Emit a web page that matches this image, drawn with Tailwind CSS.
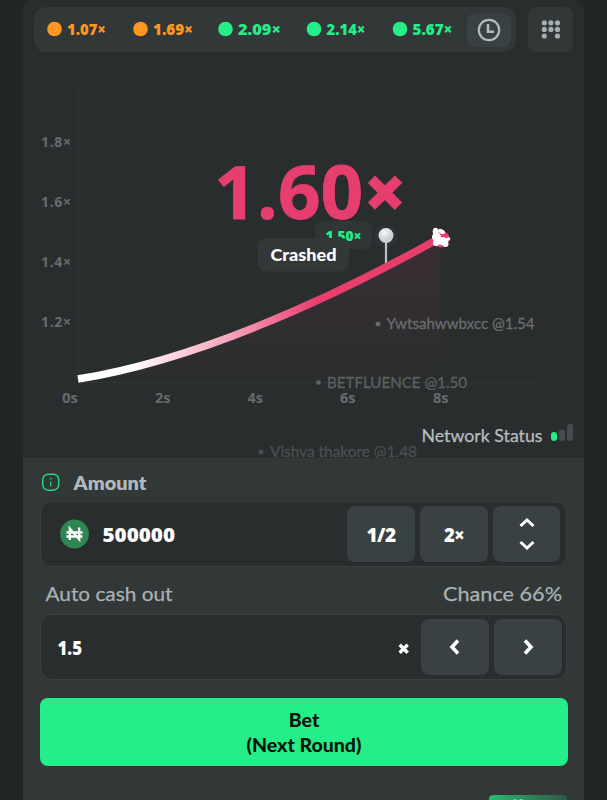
<!DOCTYPE html>
<html lang="en">
<head>
<meta charset="utf-8">
<meta name="viewport" content="width=device-width, initial-scale=1">
<title>Crash</title>
<script src="https://cdn.jsdelivr.net/npm/@tailwindcss/browser@4"></script>
</head>
<body class="h-[800px] overflow-hidden bg-[#232626] px-[23px] font-['Lato','Noto_Sans',sans-serif] font-bold">
<main class="flex h-[800px] w-[561px] flex-col overflow-hidden rounded-t-xl bg-[#323738]">
  <section class="relative flex h-[458px] shrink-0 flex-col bg-[#2a2d2e]">
    <header class="flex gap-3 pt-[7px] pl-[11px]">
      <div class="flex h-[45px] w-[482px] items-center rounded-xl bg-[#323738]">
        <svg class="h-[45px] w-[430px]" viewBox="34 7 430 45" font-family="'Open Sans', 'Noto Sans', sans-serif" font-weight="800" font-size="16.500">
          <g fill="#ff9820">
            <circle cx="54.500" cy="29" r="7.300"/><text x="67" y="35" textLength="39" lengthAdjust="spacingAndGlyphs">1.07×</text>
            <circle cx="140.500" cy="29" r="7.300"/><text x="153" y="35" textLength="40" lengthAdjust="spacingAndGlyphs">1.69×</text>
          </g>
          <g fill="#25ee89">
            <circle cx="225.500" cy="29" r="7.300"/><text x="238" y="35" textLength="43" lengthAdjust="spacingAndGlyphs">2.09×</text>
            <circle cx="314" cy="29" r="7.300"/><text x="326.500" y="35" textLength="39" lengthAdjust="spacingAndGlyphs">2.14×</text>
            <circle cx="400" cy="29" r="7.300"/><text x="412.500" y="35" textLength="40" lengthAdjust="spacingAndGlyphs">5.67×</text>
          </g>
        </svg>
        <button class="ml-[3px] grid h-[34px] w-[44px] place-items-center rounded-lg bg-[#3a4142]">
          <svg class="size-6" viewBox="0 0 24 24" fill="none" stroke="#b0b9bc" stroke-width="2.200"><circle cx="12" cy="12" r="10.200"/><path d="M11 6v7.800h6" stroke-width="2.600"/></svg>
        </button>
      </div>
      <button class="grid size-[45px] place-items-center rounded-lg bg-[#323738]">
        <svg class="h-5 w-5" viewBox="0 0 20 20" fill="#a5aeb1"><circle cx="3.300" cy="2.800" r="2.600"/><circle cx="9.900" cy="2.800" r="2.600"/><circle cx="16.500" cy="2.800" r="2.600"/><circle cx="3.300" cy="9.400" r="2.600"/><circle cx="9.900" cy="9.400" r="2.600"/><circle cx="16.500" cy="9.400" r="2.600"/><circle cx="3.300" cy="16" r="2.600"/><circle cx="16.500" cy="16" r="2.600"/></svg>
      </button>
    </header>
    <svg class="h-[406px] w-[561px]" viewBox="23 52 561 406" font-family="Lato, 'Noto Sans', sans-serif">
      <defs>
        <linearGradient id="curve" gradientUnits="userSpaceOnUse" x1="78" y1="0" x2="440" y2="0"><stop offset=".14" stop-color="#fff"/><stop offset=".43" stop-color="#f6a0b7"/><stop offset=".66" stop-color="#ea3e70"/><stop offset="1" stop-color="#e63e6e"/></linearGradient>
        <linearGradient id="area" x1="0" y1="0" x2="0" y2="1"><stop stop-color="#e63e6e" stop-opacity=".09"/><stop offset="1" stop-color="#e63e6e" stop-opacity="0"/></linearGradient>
        <radialGradient id="ball" cx=".4" cy=".3"><stop stop-color="#f4f8fa"/><stop offset="1" stop-color="#c8d1d5"/></radialGradient>
      </defs>
      <path d="M78.500 85V382.500H541M78 141.500h5M78 202h5M78 262h5M78 322h5" stroke="#2f3435" fill="none"/>
      <path d="M78 379C190 361 320 305 440 238V382H78Z" fill="url(#area)"/>
      <g fill="#666b6d" font-size="14" font-weight="700" font-family="'Open Sans', 'Noto Sans', sans-serif">
        <text x="41" y="147" textLength="30">1.8×</text><text x="41" y="207" textLength="30">1.6×</text><text x="41" y="267" textLength="30">1.4×</text><text x="41" y="327" textLength="30">1.2×</text>
        <text x="62" y="402.500" textLength="16" lengthAdjust="spacingAndGlyphs">0s</text><text x="155" y="402.500" textLength="15.500" lengthAdjust="spacingAndGlyphs">2s</text><text x="247.500" y="402.500" textLength="15.500" lengthAdjust="spacingAndGlyphs">4s</text><text x="340" y="402.500" textLength="15.500" lengthAdjust="spacingAndGlyphs">6s</text><text x="433" y="402.500" textLength="15.500" lengthAdjust="spacingAndGlyphs">8s</text>
      </g>
      <text x="214" y="219" textLength="193" lengthAdjust="spacingAndGlyphs" font-size="74" font-weight="700" fill="#e63e6e" stroke="#e63e6e" stroke-width=".8" font-family="'Open Sans', 'Noto Sans', sans-serif">1.60<tspan font-weight="800">×</tspan></text>
      <g font-size="16" font-weight="400" stroke-width=".3">
        <g fill="#696d6f" stroke="#696d6f"><circle cx="378" cy="324" r="2.300"/><text x="386.500" y="329" textLength="148" lengthAdjust="spacingAndGlyphs">Ywtsahwwbxcc @1.54</text></g>
        <g fill="#5b6062" stroke="#5b6062"><circle cx="318.500" cy="382.500" r="2.300"/><text x="327" y="388" textLength="140" lengthAdjust="spacingAndGlyphs">BETFLUENCE @1.50</text></g>
        <g fill="#4a4f51" stroke="#4a4f51"><circle cx="261" cy="452" r="2.300"/><text x="270" y="457" textLength="147" lengthAdjust="spacingAndGlyphs">Vishva thakore @1.48</text></g>
      </g>
      <rect x="315" y="221" width="57" height="28" rx="8" fill="#303536"/>
      <text x="325.500" y="240.500" textLength="36" font-size="14.500" font-weight="800" fill="#25ee89" lengthAdjust="spacingAndGlyphs" font-family="'Open Sans', 'Noto Sans', sans-serif">1.50×</text>
      <circle cx="386" cy="236" r="11.500" fill="#3b4041" opacity=".3"/>
      <path d="M386 240v27" stroke="#b7c0c3" stroke-width="2.200"/><circle cx="386" cy="235.500" r="7.500" fill="url(#ball)"/>
      <path d="M78 379C190 361 320 305 440 238" fill="none" stroke="url(#curve)" stroke-width="7.500"/>
      <circle cx="441" cy="239" r="8.500" fill="#e63e6e"/>
      <g fill="#fff"><ellipse cx="435.500" cy="231.500" rx="2.800" ry="3.700"/><ellipse cx="441.500" cy="231.500" rx="3.600" ry="2.200" transform="rotate(25 441.500 231.500)"/><circle cx="436.500" cy="237" r="4.500"/><ellipse cx="442" cy="241" rx="6" ry="4"/><circle cx="445.500" cy="244" r="3"/><circle cx="448.500" cy="239" r="1.800"/><circle cx="436" cy="243" r="3"/></g>
      <rect x="258" y="238" width="91" height="33.500" rx="8" fill="#323738"/>
      <text x="270.500" y="261" textLength="66" lengthAdjust="spacingAndGlyphs" font-size="17" font-weight="900" fill="#fff">Crashed</text>
      <text x="421.500" y="441.500" textLength="121" lengthAdjust="spacingAndGlyphs" font-size="17" font-weight="400" fill="#b5bdbf" stroke="#b5bdbf" stroke-width=".25">Network Status</text>
      <rect x="551" y="432" width="6" height="9" rx="3" fill="#25ee89"/><rect x="559" y="429.500" width="6" height="11.500" rx="2.500" fill="#464c4e"/><rect x="567" y="424" width="6" height="17" rx="2.500" fill="#464c4e"/>
    </svg>
  </section>
  <section class="flex flex-col pr-[17px] pl-[17px]">
    <svg class="h-[43px] w-[527px]" viewBox="40 458 527 43" font-family="Lato, 'Noto Sans', sans-serif">
      <rect x="42.700" y="474.200" width="16" height="16" rx="5.500" fill="none" stroke="#25d980" stroke-width="1.500"/>
      <path d="M50.700 481.500v5M50.700 478v1.500" stroke="#25d980" stroke-width="1.300"/>
      <text x="73.500" y="489.500" textLength="73" lengthAdjust="spacingAndGlyphs" font-size="19.500" font-weight="800" fill="#b0b9bb">Amount</text>
    </svg>
    <div class="flex h-[66px] w-[527px] items-center gap-[5px] rounded-xl border border-[#3a4142] bg-[#2a2d2e] px-[6px]">
      <svg class="h-[56px] w-[293px] shrink-0" viewBox="47 506 293 56">
        <circle cx="74.500" cy="534" r="14.400" fill="#2f8653"/>
        <path d="M69.800 540v-11.500l9.400 11v-12M66.500 532.500h16M66.500 536.500h16" fill="none" stroke="#fff" stroke-width="2.300"/>
        <text x="102.500" y="541.500" textLength="72.500" lengthAdjust="spacingAndGlyphs" font-size="19.500" font-weight="800" font-family="'Open Sans', sans-serif" fill="#fff">500000</text>
      </svg>
      <button class="ml-auto h-[56px] w-[68px] rounded-lg bg-[#3a4142] pt-0.5 font-['Open_Sans',sans-serif] text-[19px] font-extrabold tracking-[-0.5px] text-white">1/2</button>
      <button class="h-[56px] w-[68px] rounded-lg bg-[#3a4142] pt-0.5 font-['Open_Sans',sans-serif] text-[18.500px] font-extrabold tracking-[-0.8px] text-white">2×</button>
      <button class="grid h-[56px] w-[67px] place-items-center rounded-lg bg-[#3a4142]"><svg class="h-9 w-5" viewBox="0 0 20 36" fill="none" stroke="#fff" stroke-width="3"><path d="M3.500 10l6.500-6 6.500 6M3.500 26l6.500 6 6.500-6"/></svg></button>
    </div>
    <svg class="h-[47px] w-[527px]" viewBox="40 567 527 47" font-family="Lato, 'Noto Sans', sans-serif" font-size="20" font-weight="400" fill="#a9b2b4" stroke="#a9b2b4" stroke-width=".25">
      <text x="45.500" y="601" textLength="127" lengthAdjust="spacingAndGlyphs">Auto cash out</text><text x="443" y="601" textLength="119" lengthAdjust="spacingAndGlyphs">Chance 66%</text>
    </svg>
    <div class="flex h-[66px] w-[527px] items-center gap-[5px] rounded-xl border border-[#3a4142] bg-[#2a2d2e] pr-[4px] pl-[5px]">
      <svg class="h-[56px] w-[370px]" viewBox="46 619 370 56">
        <text x="57.500" y="654.500" textLength="24.500" font-size="19" lengthAdjust="spacingAndGlyphs" font-weight="800" font-family="'Open Sans', sans-serif" fill="#fff">1.5</text>
        <path d="M399.700 644.700l8 8m0-8l-8 8" stroke="#fff" stroke-width="3.400"/>
      </svg>
      <button class="ml-auto grid h-[56px] w-[68px] place-items-center rounded-lg bg-[#3a4142]"><svg class="size-5" viewBox="0 0 20 20" fill="none" stroke="#fff" stroke-width="3.600"><path d="M13 3.500L7 10l6 6.500"/></svg></button>
      <button class="grid h-[56px] w-[68px] place-items-center rounded-lg bg-[#3a4142]"><svg class="size-5" viewBox="0 0 20 20" fill="none" stroke="#fff" stroke-width="3.600"><path d="M7 3.500l6 6.500-6 6.500"/></svg></button>
    </div>
    <button class="mt-[18px] h-[68px] w-[528px] rounded-lg bg-[#25ee89] text-[19.500px] leading-[25px] font-black text-[#06140b]">Bet<br>(Next Round)</button>
    <div class="mt-[29px] flex h-5 w-[78px] justify-center self-end rounded-t-sm bg-linear-to-r from-[#2bb873] to-[#2b5a44] pt-1 pr-5"><svg class="h-3 w-3" viewBox="0 0 12 12" fill="#9fd3b9"><circle cx="3" cy="2" r="2"/><circle cx="9" cy="2" r="2"/></svg></div>
  </section>
</main>
</body>
</html>
